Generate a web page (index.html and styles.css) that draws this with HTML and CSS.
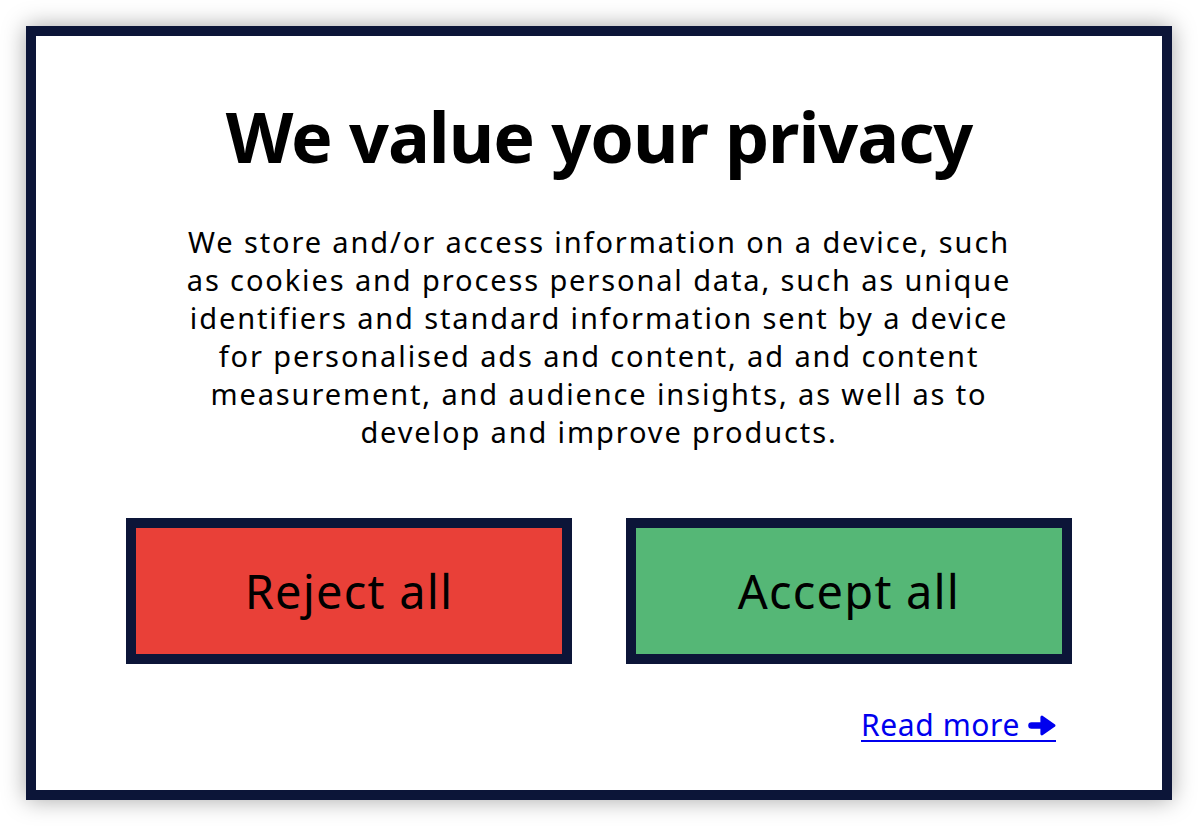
FILE: index.html
```html
<!DOCTYPE html>
<html lang="en">
<head>
<meta charset="utf-8">
<title>We value your privacy</title>
<link rel="stylesheet" href="styles.css">
</head>
<body>
<div class="dialog">
  <h1 class="title">We value your privacy</h1>
  <p class="text">We store and/or access information on a device, such as cookies and process personal data, such as unique identifiers and standard information sent by a device for personalised ads and content, ad and content measurement, and audience insights, as well as to develop and improve products.</p>
  <div class="actions">
    <button class="btn btn-reject">Reject all</button>
    <button class="btn btn-accept">Accept all</button>
  </div>
  <div class="more-row">
    <a class="more" href="#">Read more<svg class="arrow" viewBox="0 0 28 21" width="28" height="21" aria-hidden="true"><path d="M3.5 10.5 H16" stroke="#0000ee" stroke-width="6.5" stroke-linecap="round" fill="none"/><path d="M14 2.2 L25.8 10.5 L14 18.8 Z" fill="#0000ee" stroke="#0000ee" stroke-width="3.2" stroke-linejoin="round"/></svg></a>
  </div>
</div>
</body>
</html>
```
FILE: styles.css
```css
html, body {
  margin: 0;
  padding: 0;
  background: #ffffff;
}
body {
  font-family: "Noto Sans", "Open Sans", "Liberation Sans", sans-serif;
  color: #000;
}
.dialog {
  box-sizing: border-box;
  margin: 26px;
  height: 774px;
  border: 10px solid #0c1538;
  background: #fff;
  box-shadow: 0 0 22px rgba(0, 0, 0, 0.35);
  display: flex;
  flex-direction: column;
  align-items: center;
  padding: 0 90px;
}
.title {
  margin: 58px 0 0;
  font-size: 70px;
  font-weight: 700;
  line-height: 84px;
  letter-spacing: -1px;
  text-align: center;
}
.text {
  margin: 45px 0 0;
  max-width: 840px;
  font-size: 29px;
  line-height: 38px;
  letter-spacing: 1.88px;
  text-align: center;
}
.actions {
  align-self: stretch;
  display: flex;
  justify-content: space-between;
  margin-top: 67px;
}
.btn {
  box-sizing: border-box;
  width: 446px;
  height: 146px;
  border: 10px solid #0c1538;
  font-family: "Noto Sans", "Open Sans", "Liberation Sans", sans-serif;
  font-size: 47px;
  letter-spacing: 1.2px;
  color: #000;
  padding: 0;
}
.btn-reject { background: #e94038; }
.btn-accept { background: #55b776; }
.more-row {
  align-self: stretch;
  display: flex;
  justify-content: flex-end;
  padding-right: 16px;
  margin-top: 46px;
}
.more {
  display: inline-flex;
  align-items: baseline;
  color: #0000ee;
  font-size: 30px;
  line-height: 30px;
  letter-spacing: 0.6px;
  text-decoration: none;
  border-bottom: 2px solid #0000ee;
}
.arrow {
  margin-left: 8px;
  margin-bottom: -1px;
  display: block;
}
```
